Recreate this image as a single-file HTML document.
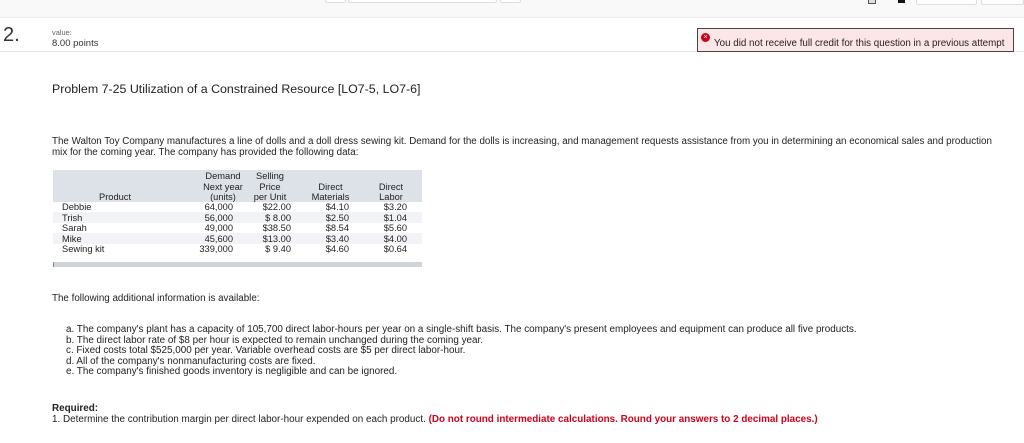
<!DOCTYPE html><html><head><style>
*{margin:0;padding:0;box-sizing:border-box}
body{width:1024px;height:443px;background:#fff;font-family:"Liberation Sans",Arial,sans-serif;position:relative;overflow:hidden;color:#222}
.a{position:absolute;white-space:nowrap}
.top{position:absolute;left:0;top:0;width:1024px;height:18px;background:#f9f9f9;border-bottom:1px solid #ececec}
.bx{position:absolute;top:-1px;background:#fff;border:1px solid #ddd;border-radius:2px}
.t{font-size:9.3px;line-height:10.5px}
</style></head><body>
<div class="top"></div>
<div class="bx" style="left:325px;width:21px;height:4px"></div>
<div class="bx" style="left:348px;width:149px;height:4px"></div>
<div class="bx" style="left:500px;width:21px;height:4px"></div>
<div class="a" style="left:868px;top:0;width:8px;height:4px;border:1px solid #555;border-top:none;background:#ddd"></div>
<div class="a" style="left:898px;top:0;width:7px;height:3px;background:#111"></div>
<div class="bx" style="left:916px;width:61px;height:6px"></div>
<div class="bx" style="left:981px;width:43px;height:6px"></div>
<div class="a" style="left:3px;top:24px;font-size:20px;color:#333">2.</div>
<div class="a" style="left:52px;top:28px;font-size:7.4px;color:#666">value:</div>
<div class="a" style="left:52px;top:38px;font-size:9.5px;color:#333">8.00 points</div>
<div class="a" style="left:0;top:51px;width:1024px;height:1px;background:#e5e5e5"></div>
<div class="a" style="left:697px;top:28px;width:317px;height:24px;background:#fde6e8;border:1px solid #444"></div>
<div class="a" style="left:701px;top:33px;width:9px;height:9px;border-radius:50%;background:#d0021b;color:#fff;font-size:7px;line-height:9px;text-align:center">×</div>
<div class="a" style="left:714px;top:38px;font-size:9.8px;color:#222">You did not receive full credit for this question in a previous attempt</div>
<div class="a" style="left:52px;top:82px;font-size:12.4px;color:#222">Problem 7-25 Utilization of a Constrained Resource [LO7-5, LO7-6]</div>
<div class="a" style="left:52px;top:136px;font-size:9.8px;line-height:11px;color:#222;white-space:normal;width:955px">The Walton Toy Company manufactures a line of dolls and a doll dress sewing kit. Demand for the dolls is increasing, and management requests assistance from you in determining an economical sales and production mix for the coming year. The company has provided the following data:</div>
<div class="a" style="left:53px;top:170px;width:369px;height:32px;background:#dde1e8"></div>
<div class="a" style="left:53px;top:212px;width:369px;height:11px;background:#f2f3f6"></div>
<div class="a" style="left:53px;top:233px;width:369px;height:11px;background:#f2f3f6"></div>
<div class="a t" style="left:53px;top:171px;width:369px">
<div class="a" style="left:150px;top:0;width:40px;text-align:center">Demand<br>Next year<br>(units)</div>
<div class="a" style="left:197px;top:0;width:40px;text-align:center">Selling<br>Price<br>per Unit</div>
<div class="a" style="left:255px;top:10.5px;width:45px;text-align:center">Direct<br>Materials</div>
<div class="a" style="left:318px;top:10.5px;width:40px;text-align:center">Direct<br>Labor</div>
<div class="a" style="left:46px;top:21px">Product</div>
</div>
<div class="a t" style="left:62px;top:202px">Debbie<br>Trish<br>Sarah<br>Mike<br>Sewing kit</div>
<div class="a t" style="left:183px;top:202px;width:50px;text-align:right">64,000<br>56,000<br>49,000<br>45,600<br>339,000</div>
<div class="a t" style="left:241px;top:202px;width:50px;text-align:right">$22.00<br>$ 8.00<br>$38.50<br>$13.00<br>$ 9.40</div>
<div class="a t" style="left:299px;top:202px;width:50px;text-align:right">$4.10<br>$2.50<br>$8.54<br>$3.40<br>$4.60</div>
<div class="a t" style="left:357px;top:202px;width:50px;text-align:right">$3.20<br>$1.04<br>$5.60<br>$4.00<br>$0.64</div>
<div class="a" style="left:53px;top:262px;width:369px;height:5px;background:#cfd3da;border-left:1px solid #888"></div>
<div class="a" style="left:52px;top:293px;font-size:9.8px">The following additional information is available:</div>
<div class="a" style="left:66px;top:325px;font-size:9.9px;line-height:10.6px">a. The company's plant has a capacity of 105,700 direct labor-hours per year on a single-shift basis. The company's present employees and equipment can produce all five products.<br>b. The direct labor rate of $8 per hour is expected to remain unchanged during the coming year.<br>c. Fixed costs total $525,000 per year. Variable overhead costs are $5 per direct labor-hour.<br>d. All of the company's nonmanufacturing costs are fixed.<br>e. The company's finished goods inventory is negligible and can be ignored.</div>
<div class="a" style="left:52px;top:404px;font-size:9.9px;line-height:10.6px"><b>Required:</b><br>1. Determine the contribution margin per direct labor-hour expended on each product. <b style="color:#d0021b">(Do not round intermediate calculations. Round your answers to 2 decimal places.)</b></div>
</body></html>
